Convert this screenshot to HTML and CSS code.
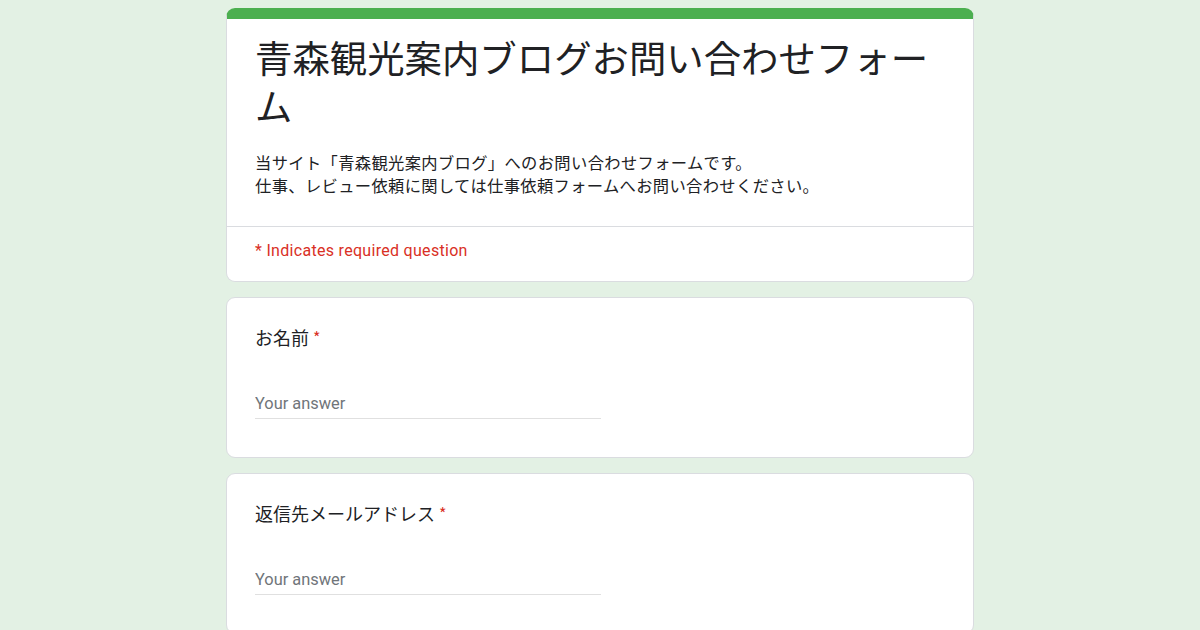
FILE: index.html
```html
<!DOCTYPE html>
<html lang="ja">
<head>
    <meta charset="UTF-8">
    <meta name="viewport" content="width=device-width, initial-scale=1.0">
    <title>青森観光案内ブログお問い合わせフォーム</title>
    <link rel="stylesheet" href="styles.css">
</head>
<body>

    <div class="form-wrap">
        <div class="card header-card">
            <div class="header-top">
                <h1 class="form-title">青森観光案内ブログお問い合わせフォーム</h1>
                <div class="form-desc">
                    当サイト「青森観光案内ブログ」へのお問い合わせフォームです。<br>
                    仕事、レビュー依頼に関しては仕事依頼フォームへお問い合わせください。
                </div>
            </div>
            <div class="required-note">* Indicates required question</div>
        </div>

        <div class="card question">
            <div class="q-label">お名前<span class="req">*</span></div>
            <input type="text" class="q-input" placeholder="Your answer">
        </div>

        <div class="card question">
            <div class="q-label">返信先メールアドレス<span class="req">*</span></div>
            <input type="text" class="q-input" placeholder="Your answer">
        </div>
    </div>

</body>
</html>
```

FILE: styles.css
```css
body {
    margin: 0;
    background-color: #e3f1e4;
    font-family: Roboto, "Noto Sans CJK JP", sans-serif;
    color: #202124;
}

.form-wrap {
    width: 748px;
    margin: 8px auto 0;
    display: flex;
    flex-direction: column;
    gap: 15px;
}

.card {
    background-color: #fff;
    border: 1px solid #dadce0;
    border-radius: 9px;
    box-sizing: border-box;
}

.header-card {
    border-top: 11px solid #4caf50;
}

.header-top {
    padding: 14px 28px 29px;
    border-bottom: 1px solid #dadce0;
}

.form-title {
    margin: 0;
    font-family: "Noto Sans CJK JP", sans-serif;
    font-size: 37.4px;
    font-weight: 400;
    line-height: 48px;
}

.form-desc {
    margin-top: 22px;
    font-family: "Noto Sans CJK JP", sans-serif;
    font-size: 16.3px;
    letter-spacing: 0.35px;
    line-height: 23px;
}

.required-note {
    padding: 13px 28px 19px;
    color: #d93025;
    font-size: 16px;
    letter-spacing: 0.3px;
    line-height: 22px;
}

.question {
    padding: 26px 28px 38px;
}

.q-label {
    font-family: "Noto Sans CJK JP", sans-serif;
    font-size: 18px;
    line-height: 26px;
}

.req {
    color: #d93025;
    margin-left: 4px;
    font-size: 16px;
    vertical-align: 1px;
}

.q-input {
    display: block;
    width: 346px;
    margin-top: 44px;
    padding: 0 0 5px;
    border: none;
    border-bottom: 1px solid #e0e0e0;
    font-family: Roboto, sans-serif;
    font-size: 16.4px;
    color: #202124;
    outline: none;
}

.q-input::placeholder {
    color: #70757a;
}
```
